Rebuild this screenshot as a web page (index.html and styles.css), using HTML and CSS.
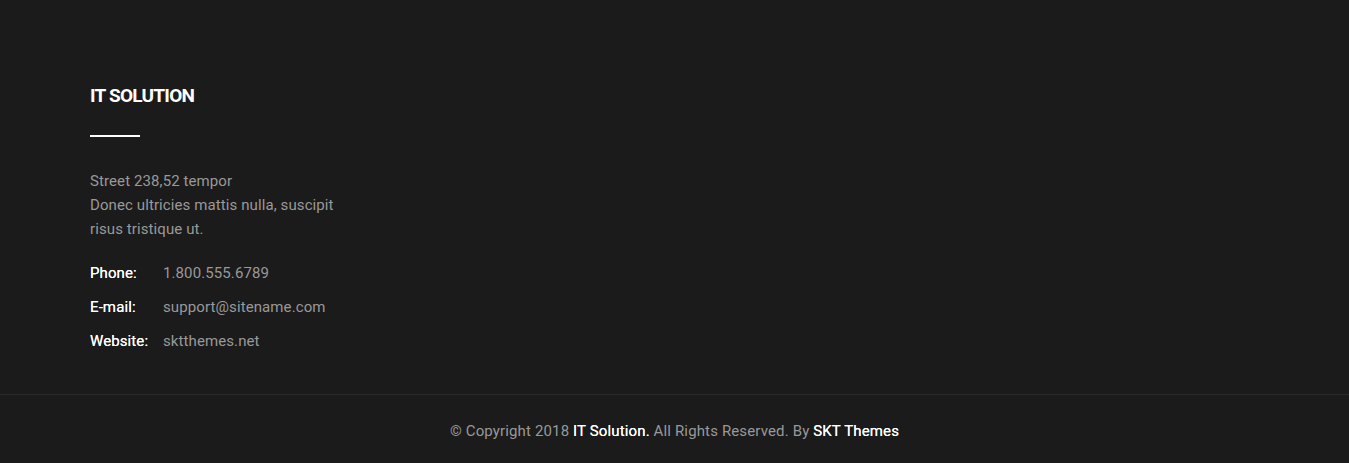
FILE: index.html
```html
<!DOCTYPE html>
<html lang="en">
<head>
<meta charset="UTF-8" />
<title>IT Solution - Footer</title>
<link rel="stylesheet" href="styles.css">
</head>
<body>

<footer class="site-footer">
  <div class="footer-cols">
    <div class="footer-col">
      <h3>IT SOLUTION</h3>
      <span class="title-line"></span>
      <p class="address">Street 238,52 tempor<br>Donec ultricies mattis nulla, suscipit risus tristique ut.</p>
      <div class="contact-row"><span class="label">Phone:</span><span>1.800.555.6789</span></div>
      <div class="contact-row"><span class="label">E-mail:</span><span>support@sitename.com</span></div>
      <div class="contact-row"><span class="label">Website:</span><span>sktthemes.net</span></div>
    </div>
  </div>

  <div class="copyright">
    &copy; Copyright 2018 <a href="#">IT Solution.</a> All Rights Reserved. By <a href="#">SKT Themes</a>
  </div>
</footer>

</body>
</html>
```

FILE: styles.css
```css
body { margin: 0; padding: 0; background: #1b1b1b; font-family: Roboto, "Liberation Sans", sans-serif; }
.site-footer { background: #1b1b1b; color: #999; }
.footer-cols { padding: 84px 90px 41px; display: flex; }
.footer-col { width: 270px; }
.footer-col h3 { margin: 0; color: #fff; font-size: 19px; font-weight: 700; line-height: 24px; letter-spacing: -0.75px; }
.title-line { display: block; width: 50px; height: 2px; background: #fff; margin: 27px 0 32px; }
.address { margin: 0 0 20px; font-size: 15px; line-height: 24px; letter-spacing: 0.1px; }
.contact-row { display: flex; font-size: 15px; line-height: 24px; margin-bottom: 10px; letter-spacing: 0.1px; }
.contact-row:last-child { margin-bottom: 0; }
.contact-row .label { width: 73px; color: #fff; text-shadow: 0 0 0.4px #fff; }

.copyright { border-top: 1px solid #2a2a2a; text-align: center; font-size: 15px; line-height: 24px; padding: 24px 0 20px; letter-spacing: 0.14px; }
.copyright a { color: #fff; text-decoration: none; text-shadow: 0 0 0.4px #fff; }
```
